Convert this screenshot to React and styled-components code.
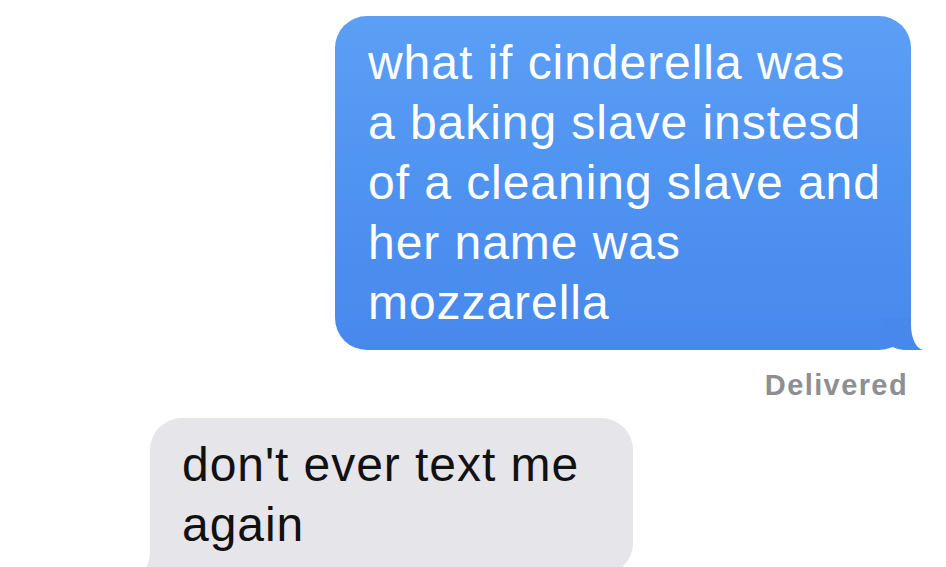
import React from "react";
import styled, { createGlobalStyle, css } from "styled-components";

const GlobalStyle = createGlobalStyle`
  html, body {
    margin: 0;
    padding: 0;
    background: #ffffff;
    overflow: hidden;
  }
  body {
    font-family: "Liberation Sans", Arial, Helvetica, sans-serif;
    -webkit-font-smoothing: antialiased;
  }
`;

const Thread = styled.div`
  width: 946px;
  height: 567px;
  display: flex;
  flex-direction: column;
  padding-top: 16px;
  box-sizing: border-box;
  overflow: hidden;
  & > * {
    flex-shrink: 0;
  }
`;

const Row = styled.div`
  display: flex;
  justify-content: ${(p) => (p.$mine ? "flex-end" : "flex-start")};
  padding: ${(p) => (p.$mine ? "0 35px 0 0" : "0 0 0 150px")};
`;

const tailRight = css`
  &::before {
    content: "";
    position: absolute;
    right: -12px;
    bottom: 0;
    width: 42px;
    height: 32px;
    background: ${(p) => p.$tail};
    border-bottom-left-radius: 26px 18px;
  }
  &::after {
    content: "";
    position: absolute;
    right: -42px;
    bottom: 0;
    width: 42px;
    height: 34px;
    background: #ffffff;
    border-bottom-left-radius: 13px 25px;
  }
`;

const tailLeft = css`
  &::before {
    content: "";
    position: absolute;
    left: -12px;
    bottom: 0;
    width: 42px;
    height: 32px;
    background: ${(p) => p.$tail};
    border-bottom-right-radius: 26px 18px;
  }
  &::after {
    content: "";
    position: absolute;
    left: -42px;
    bottom: 0;
    width: 42px;
    height: 34px;
    background: #ffffff;
    border-bottom-right-radius: 13px 25px;
  }
`;

const Bubble = styled.div`
  position: relative;
  box-sizing: border-box;
  width: ${(p) => p.$width}px;
  padding: 17px 20px ${(p) => (p.$mine ? 17 : 20)}px ${(p) => (p.$mine ? 33 : 32)}px;
  border-radius: 32px;
  background: ${(p) => p.$bg};
  color: ${(p) => p.$fg};
  font-size: 48px;
  line-height: 60px;
  letter-spacing: 0.95px;
  white-space: nowrap;
  ${(p) => (p.$mine ? tailRight : tailLeft)}
`;

const Line = styled.div``;

const Status = styled.div`
  align-self: flex-end;
  margin: 21px 38px 0 0;
  font-size: 29px;
  line-height: 29px;
  font-weight: 700;
  letter-spacing: 1.4px;
  color: #8e8e93;
`;

const Spacer = styled.div`
  height: 18px;
`;

const sent = [
  "what if cinderella was",
  "a baking slave instesd",
  "of a cleaning slave and",
  "her name was",
  "mozzarella",
];

const received = ["don't ever text me", "again"];

export default function App() {
  return (
    <>
      <GlobalStyle />
      <Thread>
        <Row $mine>
          <Bubble
            $mine
            $width={576}
            $bg="linear-gradient(180deg, #5c9ff6 0%, #4f93f1 50%, #4888ed 100%)"
            $tail="#4888ed"
            $fg="#ffffff"
          >
            {sent.map((t) => (
              <Line key={t}>{t}</Line>
            ))}
          </Bubble>
        </Row>
        <Status>Delivered</Status>
        <Spacer />
        <Row>
          <Bubble $width={483} $bg="#e5e5ea" $tail="#e5e5ea" $fg="#111111">
            {received.map((t) => (
              <Line key={t}>{t}</Line>
            ))}
          </Bubble>
        </Row>
      </Thread>
    </>
  );
}
